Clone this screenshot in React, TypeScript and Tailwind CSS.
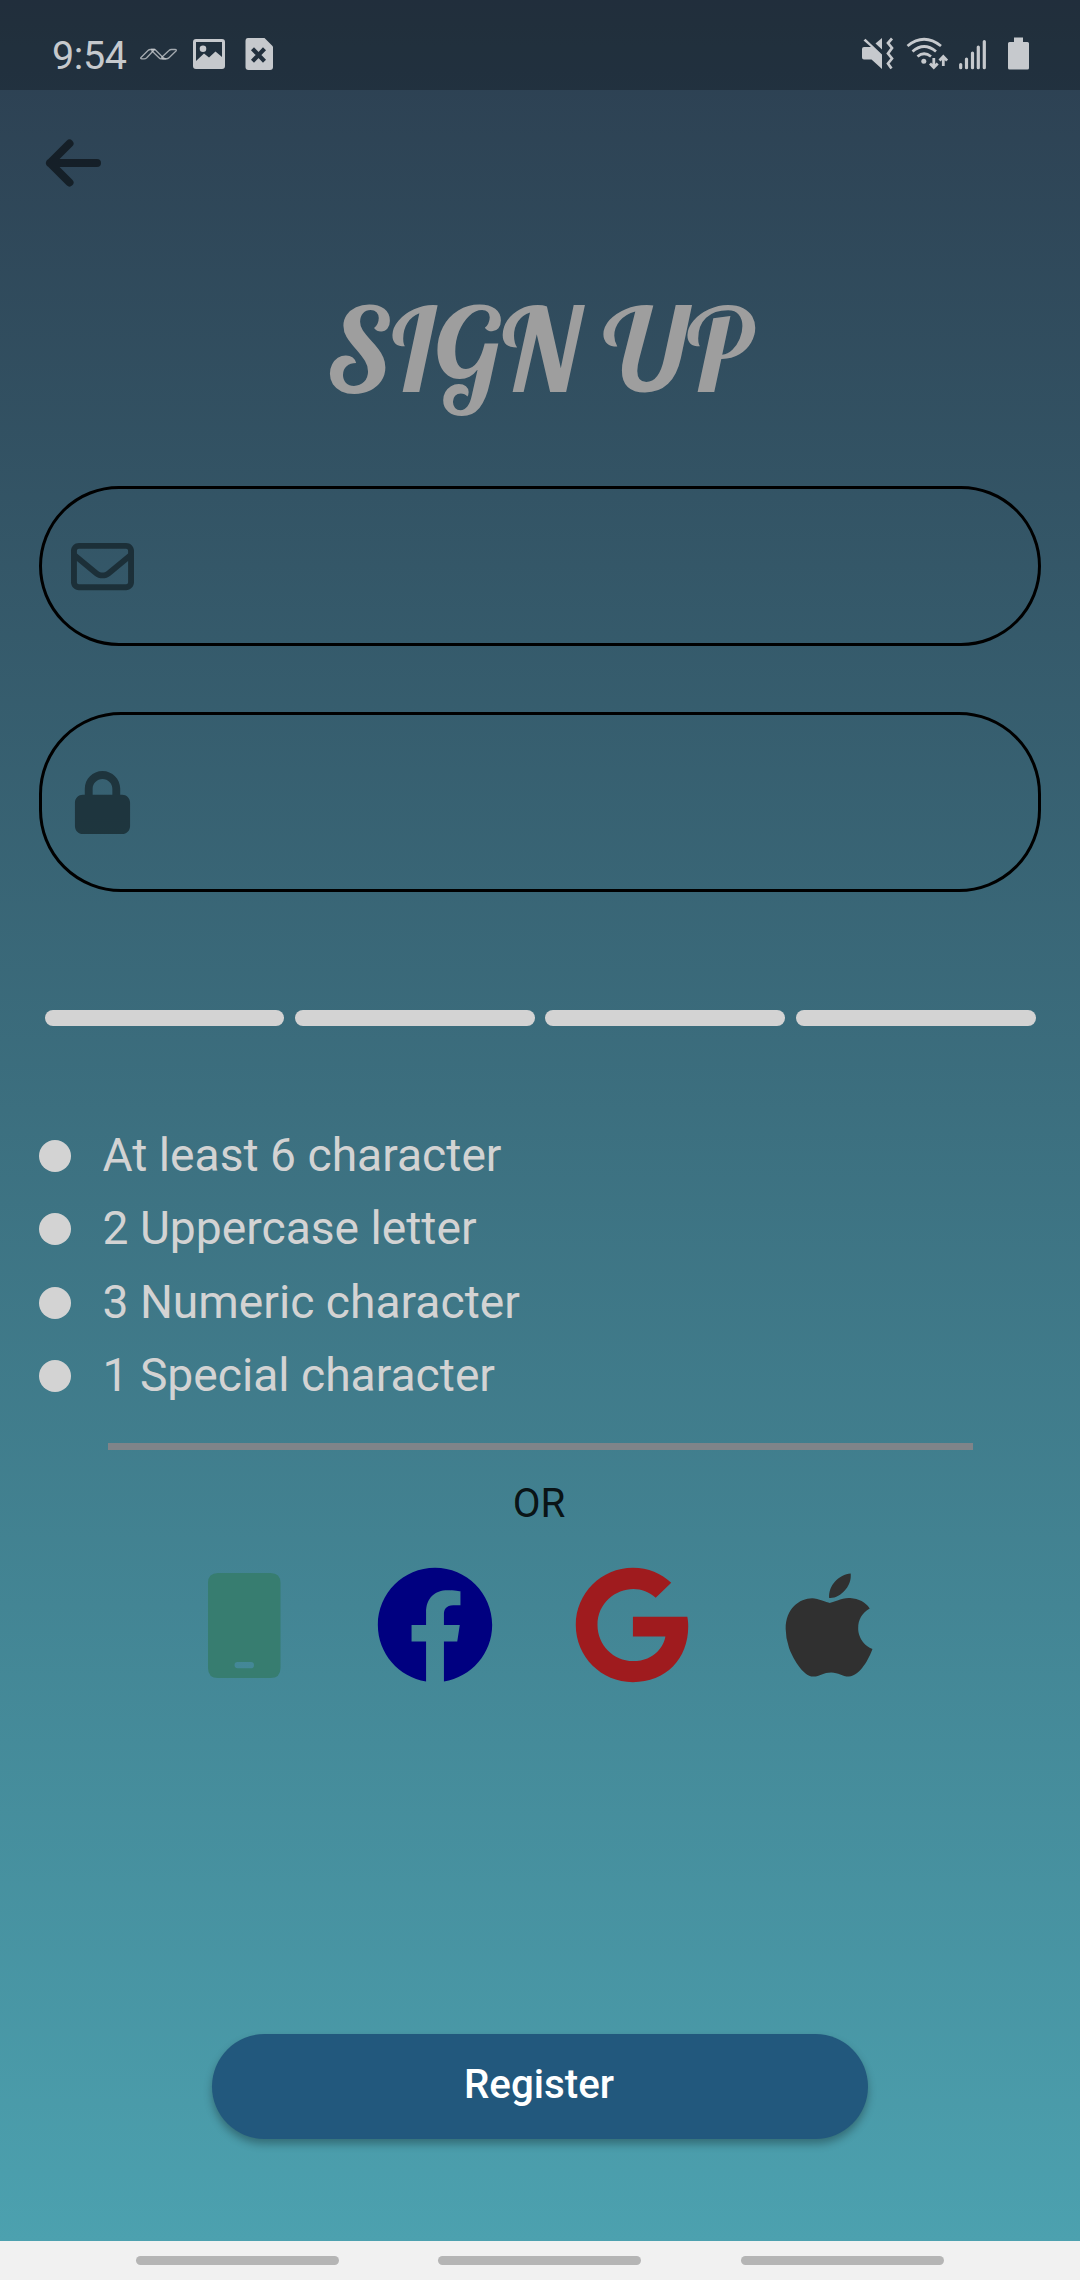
import type { ReactNode } from "react";
import { FaApple, FaFacebook, FaGoogle } from "react-icons/fa";
import { FaLock, FaRegEnvelope } from "react-icons/fa6";

const rules = [
  "At least 6 character",
  "2 Uppercase letter",
  "3 Numeric character",
  "1 Special character",
];

function StatusBar() {
  return (
    <header className="flex h-[90px] items-start bg-black/25 pl-[52px] text-[#c6c9cd]">
      <span className="mt-[33px] w-[88px] text-[39.5px] leading-[46px] tracking-[-0.4px]">9:54</span>
      <svg className="mt-[47px] h-[14px] w-[37px]" viewBox="140 47 37 14" fill="none" stroke="currentColor" strokeOpacity=".8" strokeWidth="1.300" strokeLinejoin="round">
        <path d="M141 57.500L148 50.500Q149 49.500 150.500 49.500H154.500L146.500 58Q145.500 58.800 144 58.800H142Q140 58.600 141 57.500Z" />
        <path d="M151 49.500H155L163 57.500Q164 58.800 166 58.800H161Q160 58.800 159 57.800L151.500 50.500" />
        <path d="M162 57L169 50.500Q170 49.500 171.500 49.500H175Q177 49.700 176 51L169 57.800Q168 58.800 166 58.800H163.500Q161 58.600 162 57Z" />
      </svg>
      <svg className="ml-[16px] mt-[39px] h-[30px] w-[32px]" viewBox="0 0 32 30">
        <path fill="currentColor" fillRule="evenodd" d="M3 0H29Q32 0 32 3V27Q32 30 29 30H3Q0 30 0 27V3Q0 0 3 0ZM3 3V22L11 14.500L16 18.500L22.500 12.500L29 18V3Z" />
        <circle cx="10" cy="9.700" r="3.300" fill="currentColor" />
      </svg>
      <svg className="ml-[20px] mt-[38px] h-[32px] w-[28px]" viewBox="0 0 28 32">
        <path fill="currentColor" d="M3 0H19.500L28 8.500V29Q28 32 25 32H3.500Q.5 32 .5 29V3Q.5 0 3 0Z" />
        <path d="M7.500 10.800L19.500 23.200M19.500 10.800L7.500 23.200" stroke="#22303d" strokeWidth="4.200" />
      </svg>

      <svg className="ml-[589px] mt-[37px] h-[33px] w-[32px]" viewBox="862 37 32 33">
        <g fill="currentColor">
          <path d="M864 47H871L863.500 40.500L865.500 38.800L882 54.500V69L871.500 59.500H864Q862 59.500 862 57.500V49Q862 47 864 47Z" />
          <path d="M882 38V49.500L875.500 43.500Z" />
        </g>
        <path d="M892 38.500L888 43L892 48L888 53.500L892 58.500L888 63.500L891.500 68.500" stroke="currentColor" strokeWidth="2.700" fill="none" />
      </svg>
      <svg className="ml-[12px] mt-[36px] h-[34px] w-[42px]" viewBox="905.500 36 42 34" fill="none" stroke="currentColor" strokeWidth="2.800">
        <path d="M907 46Q923.500 32.500 940.500 46M912 51.500Q923.500 41.500 935.500 51.500M917 56.500Q923.500 51 930.500 56.500" />
        <circle cx="923.300" cy="61.300" r="2.500" fill="currentColor" stroke="none" />
        <path d="M933.300 58V67M929.500 63.500L933.300 67.500L937.200 63.500M942.800 66V57M939 60.500L942.800 56.500L946.600 60.500" />
      </svg>
      <svg className="ml-[11px] mt-[39px] h-[31px] w-[28px]" viewBox="959 39 28 31" stroke="currentColor" strokeWidth="3.200" strokeLinecap="round">
        <path d="M960.700 64.500V67.700M966.500 59V67.700M972.500 53V67.700M978.300 47V67.700M984.300 41.500V67.700" />
      </svg>
      <svg className="ml-[21px] mt-[37px] h-[33px] w-[21px]" viewBox="0 0 21 33" fill="currentColor">
        <path d="M6 .5H15V5H19.500Q21 5 21 6.500V31Q21 32.500 19.500 32.500H1.500Q0 32.500 0 31V6.500Q0 5 1.500 5H6Z" />
      </svg>
    </header>
  );
}

function Field({ icon, type, className }: { icon: ReactNode; type: string; className: string }) {
  return (
    <label className={`mx-[39px] flex items-center border-3 border-black pl-[29px] text-black ${className}`}>
      <span className="flex w-[63px] justify-center opacity-45">{icon}</span>
      <input type={type} className="ml-6 flex-1 bg-transparent outline-none" />
    </label>
  );
}

export default function App() {
  return (
    <div className="flex h-[2280px] w-[1080px] flex-col overflow-hidden font-['Roboto',sans-serif]">
      <div className="flex h-[2241px] flex-col bg-linear-to-b/srgb from-[#2c3e50] to-[#4ca1af]">
        <StatusBar />

        <button className="ml-[44px] mt-[48px] h-[50px] w-[60px]" aria-label="Back">
          <svg className="h-[50px] w-[60px]" viewBox="44 138 60 50" fill="none" stroke="black" strokeOpacity=".54" strokeWidth="8" strokeLinecap="round" strokeLinejoin="round">
            <path d="M97 163H50M69.500 143.500L50 163L69.500 182.500" />
          </svg>
        </button>

        <h1 className="mt-[86px] h-[150px] whitespace-nowrap pr-[1px] text-center font-['Lobster','Liberation_Serif',serif] text-[115.500px] leading-[150px] text-[#9e9e9e]">
          SIGN UP
        </h1>

        <Field className="mt-[62px] h-[160px] rounded-[80px]" type="email" icon={<FaRegEnvelope size={63} />} />
        <Field className="mt-[66px] h-[180px] rounded-[82px]" type="password" icon={<FaLock size={63} />} />

        <div className="mx-[44.500px] mt-[118px] grid h-[16px] grid-cols-4 gap-[10.500px]">
          {rules.map((rule) => (
            <div key={rule} className="rounded-full bg-[#d3d3d3]" />
          ))}
        </div>

        <ul className="ml-[39px] mt-[93px] text-[46.200px] text-[#d3d3d3]">
          {rules.map((rule) => (
            <li key={rule} className="flex h-[73.500px] items-center">
              <span className="mr-[31.500px] size-[32px] rounded-full bg-[#d3d3d3]" />
              <span className="-mt-px">{rule}</span>
            </li>
          ))}
        </ul>

        <hr className="mx-[107.500px] mt-[30px] h-[7px] border-0 bg-[#7f8489]" />
        <p className="mt-[31px] pr-[2px] text-center text-[40.400px] leading-[46px] text-black/87">OR</p>

        <div className="mt-[39px] flex h-[118px] items-center pl-[185px]">
          <svg className="mt-[2px] h-[106px] w-[118px]" viewBox="0 0 118 106" fill="#377d70">
            <path fillRule="evenodd" d="M33 0H85.500Q95.500 0 95.500 10V95Q95.500 105 85.500 105H33Q23 105 23 95V10Q23 0 33 0ZM52.500 89Q49.500 89 49.500 92T52.500 95.300H66Q69 95.300 69 92.200T66 89Z" />
          </svg>
          <FaFacebook className="ml-[73px] text-[#000080]" size={118} />
          <FaGoogle className="ml-[79px] text-[#9f1b1e]" size={118} />
          <FaApple className="ml-[79px] text-[#303030]" size={118} />
        </div>

        <button className="mx-auto mt-[350px] h-[105px] w-[656px] rounded-full bg-[#22587d] pb-[2px] pr-[2px] text-[40.300px] font-medium text-white shadow-[0_5px_8px_rgba(0,0,0,0.3)]">
          Register
        </button>
      </div>

      <nav className="flex h-[39px] items-start justify-center gap-[99.500px] bg-[#f1f1f1] pr-[1px] pt-[15px]">
        <span className="h-[9px] w-[203px] rounded-full bg-[#b5b5b5]" />
        <span className="h-[9px] w-[203px] rounded-full bg-[#b5b5b5]" />
        <span className="h-[9px] w-[203px] rounded-full bg-[#b5b5b5]" />
      </nav>
    </div>
  );
}
